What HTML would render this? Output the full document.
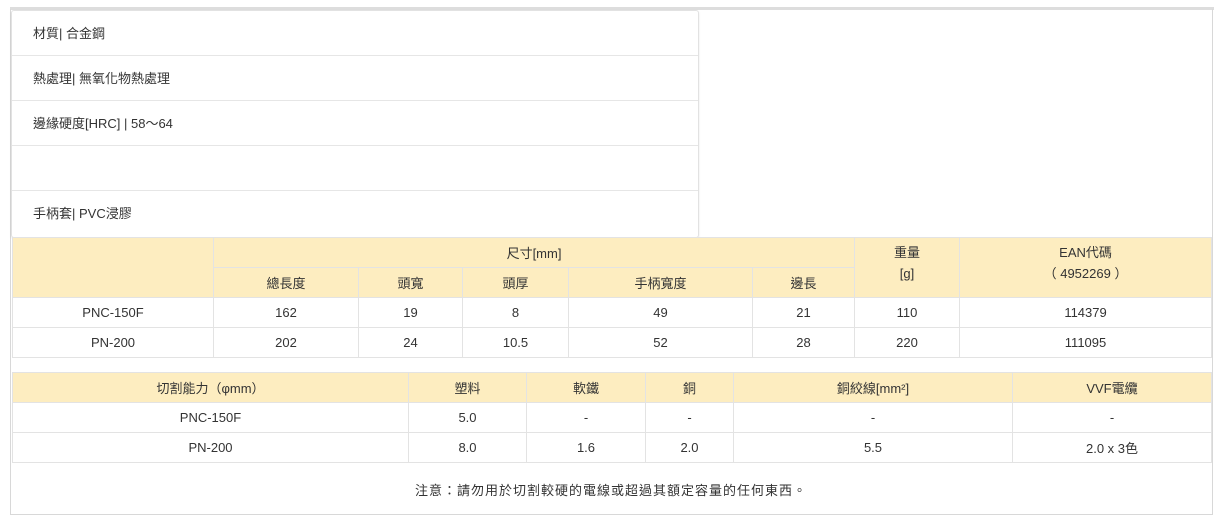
<!DOCTYPE html>
<html><head><meta charset="utf-8"><style>
body{margin:0;background:#fff;font-family:"Liberation Sans","Noto Sans CJK TC",sans-serif;font-size:13px;color:#333;}
.topbar{position:absolute;left:10px;top:7px;width:1204px;height:3px;background:#ddd;}
.outer{position:absolute;left:10px;top:9px;width:1201px;height:505px;border:1px solid #d8d8d8;border-top:none;}
.spec{position:absolute;left:11px;top:10px;width:686px;height:226px;border:1px solid #e2e2e2;border-radius:3px;background:#fff;box-shadow:0 1px 2px rgba(0,0,0,0.08);}
.spec div{height:45px;line-height:45px;padding-left:21px;border-bottom:1px solid #e6e6e6;box-sizing:border-box;}
.spec div:last-child{border-bottom:none;}
table{position:absolute;border-collapse:collapse;table-layout:fixed;}
td{border:1px solid #e3e3e3;text-align:center;padding:0;height:29px;}
.h td{background:#fdedc0;}
.note{position:absolute;left:0;width:1222px;top:480px;text-align:center;letter-spacing:1px;}
</style></head><body>
<div class="topbar"></div>
<div class="outer"></div>
<div class="spec">
<div>材質| 合金鋼</div>
<div>熱處理| 無氧化物熱處理</div>
<div>邊緣硬度[HRC] | 58～64</div>
<div></div>
<div>手柄套| PVC浸膠</div>
</div>
<table style="left:12px;top:237px;width:1199px">
<colgroup><col style="width:201px"><col style="width:145px"><col style="width:104px"><col style="width:106px"><col style="width:184px"><col style="width:102px"><col style="width:105px"><col style="width:252px"></colgroup>
<tr class="h"><td rowspan="2"></td><td colspan="5">尺寸[mm]</td><td rowspan="2" style="vertical-align:top;padding-top:4px;line-height:21px">重量<br>[g]</td><td rowspan="2" style="vertical-align:top;padding-top:4px;line-height:21px">EAN代碼<br>（ 4952269 ）</td></tr>
<tr class="h"><td>總長度</td><td>頭寬</td><td>頭厚</td><td>手柄寬度</td><td>邊長</td></tr>
<tr><td>PNC-150F</td><td>162</td><td>19</td><td>8</td><td>49</td><td>21</td><td>110</td><td>114379</td></tr>
<tr><td>PN-200</td><td>202</td><td>24</td><td>10.5</td><td>52</td><td>28</td><td>220</td><td>111095</td></tr>
</table>
<table style="left:12px;top:372px;width:1199px">
<colgroup><col style="width:396px"><col style="width:118px"><col style="width:119px"><col style="width:88px"><col style="width:279px"><col style="width:199px"></colgroup>
<tr class="h"><td>切割能力（φmm）</td><td>塑料</td><td>軟鐵</td><td>銅</td><td>銅絞線[mm²]</td><td>VVF電纜</td></tr>
<tr><td>PNC-150F</td><td>5.0</td><td>-</td><td>-</td><td>-</td><td>-</td></tr>
<tr><td>PN-200</td><td>8.0</td><td>1.6</td><td>2.0</td><td>5.5</td><td>2.0 x 3色</td></tr>
</table>
<div class="note">注意：請勿用於切割較硬的電線或超過其額定容量的任何東西。</div>
</body></html>
